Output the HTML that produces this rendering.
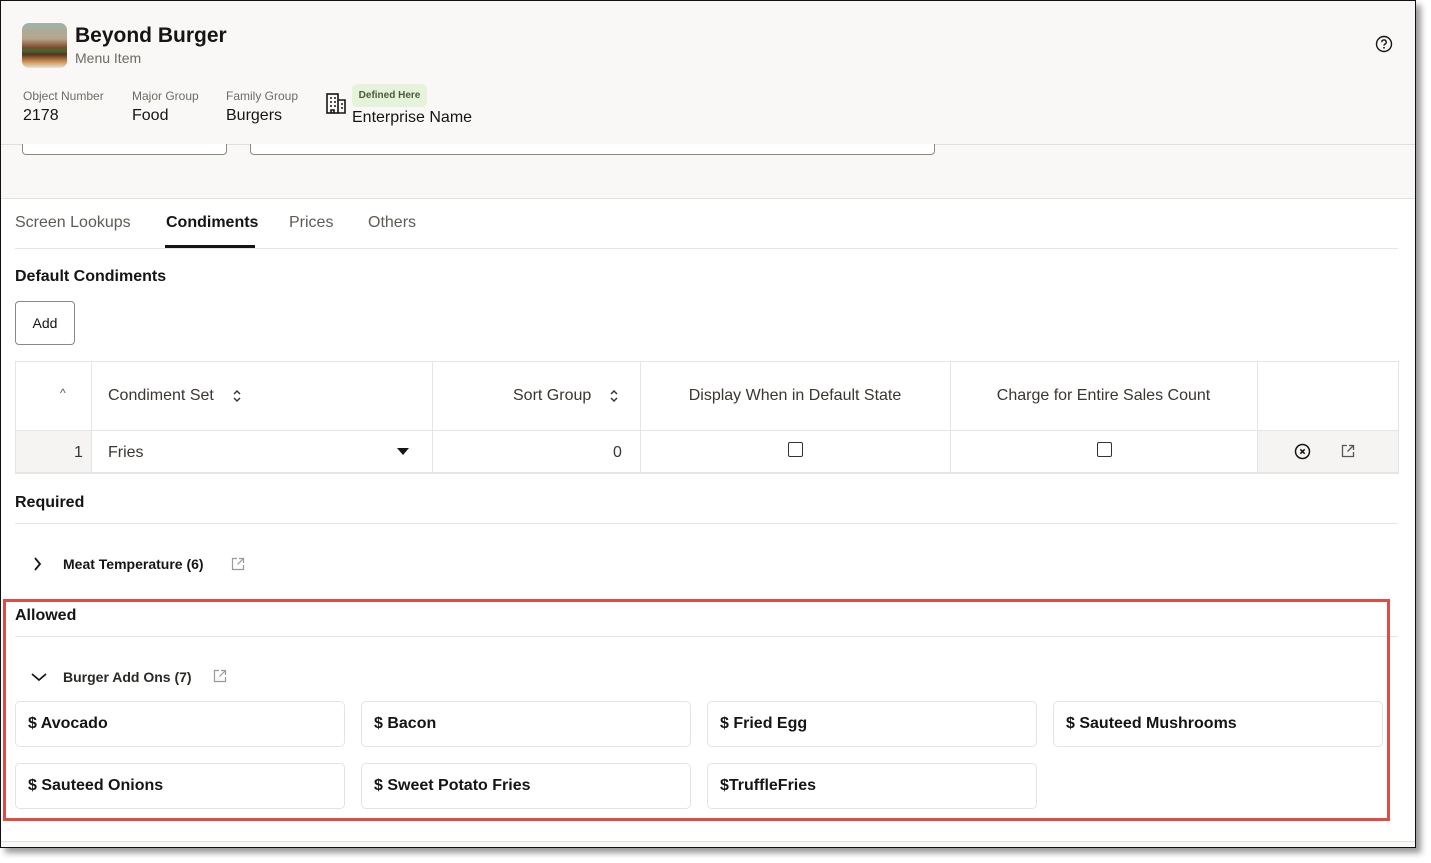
<!DOCTYPE html>
<html><head><meta charset="utf-8"><style>
*{box-sizing:border-box;margin:0;padding:0}
body{width:1431px;height:863px;background:#fff;font-family:"Liberation Sans",sans-serif;color:#161513;position:relative;overflow:hidden}
.a{position:absolute}
#frame{left:0;top:0;width:1416px;height:848px;background:#fff;box-shadow:5px 5px 6px #9a9a9a;overflow:hidden}
.lbl{font-size:12px;color:#6f6a64}
.val{font-size:16px;color:#161513}
.tab{font-size:16px;color:#5f5a55;top:214px}
.card{position:absolute;width:330px;height:46px;border:1px solid #e3e3e3;border-radius:5px;font-size:16px;font-weight:bold;color:#161513;padding-left:12px;display:flex;align-items:center}
.cb{width:15px;height:15px;border:1.5px solid #333;border-radius:2px;position:absolute}
</style></head><body>
<div id="frame" class="a">
<div class="a" style="left:0;top:0;width:1416px;height:199px;background:#f9f8f6;border-bottom:1px solid #e2e1de"></div>
<div class="a" style="left:0;top:144px;width:1416px;height:1px;background:#e0dfdc"></div>
<div class="a" style="left:22px;top:144px;width:205px;height:11px;background:#fff;border:1px solid #8c8985;border-top:none;border-radius:0 0 4px 4px"></div>
<div class="a" style="left:250px;top:144px;width:685px;height:11px;background:#fff;border:1px solid #8c8985;border-top:none;border-radius:0 0 4px 4px"></div>

<div class="a" style="left:22px;top:23px;width:45px;height:45px;border-radius:7px;background:linear-gradient(180deg,#9fb3a6 0%,#b8a58a 35%,#7a4a2a 55%,#3f6a2a 62%,#5a3322 70%,#c98d4a 85%,#e8e4dc 100%)"></div>
<div class="a" style="left:75px;top:24px;font-size:21px;font-weight:bold">Beyond Burger</div>
<div class="a" style="left:75px;top:50px;font-size:14px;color:#6f6a64">Menu Item</div>
<svg class="a" style="left:1375px;top:35px" width="18" height="18" viewBox="0 0 18 18"><circle cx="9" cy="9" r="7.5" fill="none" stroke="#161513" stroke-width="1.4"/><path d="M6.8 7.2a2.2 2.2 0 1 1 3 2c-.6.3-.8.7-.8 1.4" fill="none" stroke="#161513" stroke-width="1.4"/><circle cx="9" cy="12.8" r=".9" fill="#161513"/></svg>

<div class="a lbl" style="left:23px;top:89px">Object Number</div><div class="a val" style="left:23px;top:107px">2178</div>
<div class="a lbl" style="left:132px;top:89px">Major Group</div><div class="a val" style="left:132px;top:107px">Food</div>
<div class="a lbl" style="left:226px;top:89px">Family Group</div><div class="a val" style="left:226px;top:107px">Burgers</div>
<svg class="a" style="left:326px;top:93px" width="21" height="21" viewBox="0 0 21 21" fill="none" stroke="#161513" stroke-width="1.6"><rect x="1" y="1" width="11" height="19"/><path d="M12 7h7v13h-7"/><path d="M4 5h2M8 5h2M4 9h2M8 9h2M4 13h2M8 13h2M15 11h2M15 15h2M5 20v-3h3v3"/></svg>
<div class="a" style="left:352px;top:84px;width:75px;height:23px;background:#e4f3d9;border-radius:5px;font-size:10px;font-weight:bold;color:#4b5a3c;display:flex;align-items:center;justify-content:center">Defined Here</div>
<div class="a val" style="left:352px;top:109px">Enterprise Name</div>

<div class="a tab" style="left:15px">Screen Lookups</div>
<div class="a tab" style="left:166px;color:#161513;font-weight:bold">Condiments</div>
<div class="a tab" style="left:289px">Prices</div>
<div class="a tab" style="left:368px">Others</div>
<div class="a" style="left:15px;top:248px;width:1383px;height:1px;background:#e5e5e5"></div>
<div class="a" style="left:165px;top:245px;width:90px;height:3px;background:#161513"></div>

<div class="a" style="left:15px;top:268px;font-size:16px;font-weight:bold">Default Condiments</div>
<div class="a" style="left:15px;top:301px;width:60px;height:44px;border:1px solid #8c8985;border-radius:4px;font-size:14px;display:flex;align-items:center;justify-content:center">Add</div>

<div class="a" style="left:15px;top:361px;width:1384px;height:113px;border:1px solid #e5e5e5;border-bottom:2px solid #e5e5e5"></div>
<div class="a" style="left:15px;top:430px;width:1384px;height:1px;background:#e5e5e5"></div>
<div class="a" style="left:16px;top:431px;width:75px;height:41px;background:#f5f4f2"></div>
<div class="a" style="left:1258px;top:431px;width:140px;height:41px;background:#f5f4f2"></div>
<div class="a" style="left:91px;top:362px;width:1px;height:110px;background:#e5e5e5"></div>
<div class="a" style="left:432px;top:362px;width:1px;height:110px;background:#e5e5e5"></div>
<div class="a" style="left:640px;top:362px;width:1px;height:110px;background:#e5e5e5"></div>
<div class="a" style="left:950px;top:362px;width:1px;height:110px;background:#e5e5e5"></div>
<div class="a" style="left:1257px;top:362px;width:1px;height:110px;background:#e5e5e5"></div>

<div class="a" style="left:60px;top:386px;font-size:12px;color:#555">^</div>
<div class="a" style="left:108px;top:387px;font-size:16px;color:#3a3631">Condiment Set</div>
<svg class="a" style="left:232px;top:388px" width="10" height="16" viewBox="0 0 10 16" fill="none" stroke="#3a3631" stroke-width="1.5"><path d="M2 6l3-3 3 3M2 10l3 3 3-3"/></svg>
<div class="a" style="left:513px;top:387px;font-size:16px;color:#3a3631">Sort Group</div>
<svg class="a" style="left:609px;top:388px" width="10" height="16" viewBox="0 0 10 16" fill="none" stroke="#3a3631" stroke-width="1.5"><path d="M2 6l3-3 3 3M2 10l3 3 3-3"/></svg>
<div class="a" style="left:640px;top:387px;width:310px;text-align:center;font-size:16px;color:#3a3631">Display When in Default State</div>
<div class="a" style="left:950px;top:387px;width:307px;text-align:center;font-size:16px;color:#3a3631">Charge for Entire Sales Count</div>

<div class="a" style="left:74px;top:444px;font-size:16px;color:#3a3631">1</div>
<div class="a" style="left:108px;top:444px;font-size:16px;color:#3a3631">Fries</div>
<svg class="a" style="left:397px;top:448px" width="12" height="8"><path d="M0 0h12L6 7z" fill="#161513"/></svg>
<div class="a" style="left:613px;top:444px;font-size:16px;color:#3a3631">0</div>
<div class="cb" style="left:788px;top:442px"></div>
<div class="cb" style="left:1097px;top:442px"></div>
<svg class="a" style="left:1294px;top:443px" width="17" height="17" viewBox="0 0 17 17" fill="none" stroke="#161513" stroke-width="1.5"><circle cx="8.5" cy="8.5" r="7"/><path d="M6.3 6.3l4.4 4.4M10.7 6.3l-4.4 4.4"/></svg>
<svg class="a" style="left:1341px;top:444px" width="14" height="14" viewBox="0 0 14 14" fill="none" stroke="#555" stroke-width="1.3"><path d="M6 1.5H1.5v11h11V8M8 1.5h4.5V6M12.5 1.5L6.5 7.5"/></svg>

<div class="a" style="left:15px;top:494px;font-size:16px;font-weight:bold">Required</div>
<div class="a" style="left:15px;top:523px;width:1383px;height:1px;background:#e5e5e5"></div>
<svg class="a" style="left:33px;top:557px" width="10" height="14" viewBox="0 0 10 14" fill="none" stroke="#161513" stroke-width="1.8"><path d="M2 1l5 6-5 6"/></svg>
<div class="a" style="left:63px;top:556px;font-size:14px;font-weight:bold">Meat Temperature (6)</div>
<svg class="a" style="left:231px;top:557px" width="14" height="14" viewBox="0 0 14 14" fill="none" stroke="#999" stroke-width="1.2"><path d="M6 1.5H1.5v11h11V8M8 1.5h4.5V6M12.5 1.5L6.5 7.5"/></svg>

<div class="a" style="left:15px;top:607px;font-size:16px;font-weight:bold">Allowed</div>
<div class="a" style="left:15px;top:636px;width:1383px;height:1px;background:#e5e5e5"></div>
<svg class="a" style="left:31px;top:672px" width="16" height="10" viewBox="0 0 16 10" fill="none" stroke="#161513" stroke-width="1.8"><path d="M1 2l7 6 7-6"/></svg>
<div class="a" style="left:63px;top:669px;font-size:14px;font-weight:bold;color:#2b2926">Burger Add Ons (7)</div>
<svg class="a" style="left:213px;top:669px" width="14" height="14" viewBox="0 0 14 14" fill="none" stroke="#999" stroke-width="1.2"><path d="M6 1.5H1.5v11h11V8M8 1.5h4.5V6M12.5 1.5L6.5 7.5"/></svg>

<div class="card" style="left:15px;top:701px">$ Avocado</div>
<div class="card" style="left:361px;top:701px">$ Bacon</div>
<div class="card" style="left:707px;top:701px">$ Fried Egg</div>
<div class="card" style="left:1053px;top:701px">$ Sauteed Mushrooms</div>
<div class="card" style="left:15px;top:763px">$ Sauteed Onions</div>
<div class="card" style="left:361px;top:763px">$ Sweet Potato Fries</div>
<div class="card" style="left:707px;top:763px">$TruffleFries</div>

<div class="a" style="left:3px;top:599px;width:1387px;height:222px;border:3px solid #e04b44"></div>
<div class="a" style="left:0;top:841px;width:1416px;height:7px;background:#f9f8f6;border-top:1px solid #e2e1de"></div>
<div class="a" style="left:0;top:0;width:1416px;height:848px;border:1px solid #111"></div>
</div>
</body></html>
